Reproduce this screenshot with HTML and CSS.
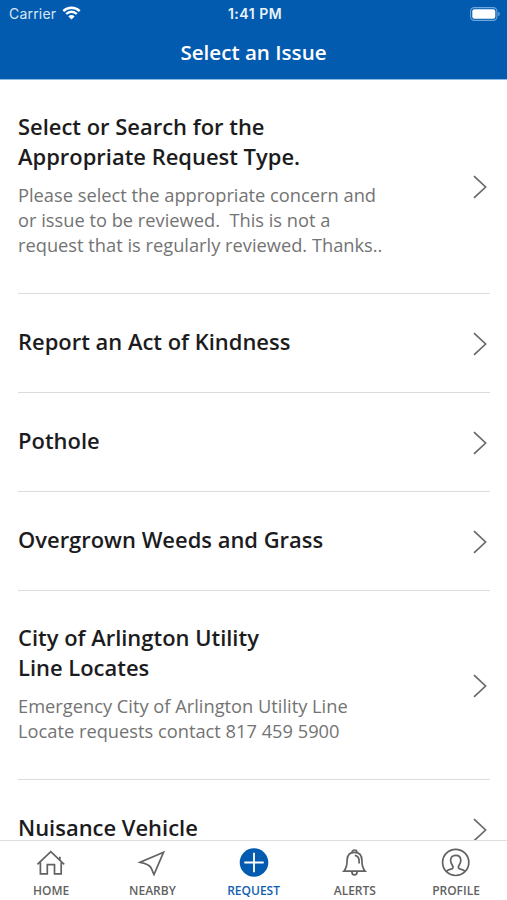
FILE: index.html
```
<!DOCTYPE html>
<html lang="en">
<head>
<meta charset="utf-8">
<title>Select an Issue</title>
<link rel="stylesheet" href="styles.css">
</head>
<body>
<svg class="sprite" aria-hidden="true"><symbol id="chevron" viewBox="0 0 16 24"><path d="M2 1.2 13.6 12 2 22.8"/></symbol></svg>
<div class="app">
  <header class="header">
    <div class="status">
      <div class="carrier"><span class="carrier-name">Carrier</span>
        <svg class="wifi" width="19" height="14" viewBox="0 0 19 14"><path d="M1.3 5.1a11.6 11.6 0 0 1 16.4 0M4.2 8a7.5 7.5 0 0 1 10.6 0" fill="none" stroke="#fff" stroke-width="2.4"/><path d="M6.4 10.4a4.4 4.4 0 0 1 6.2 0L9.5 13.5z" fill="#fff"/></svg>
      </div>
      <time class="clock">1:41 PM</time>
      <svg class="battery" width="31" height="14" viewBox="0 0 31 14"><rect x=".6" y=".6" width="26.3" height="12.8" rx="3.6" fill="none" stroke="#6ea5db" stroke-width="1.1"/><rect x="2.3" y="2.3" width="23" height="9.4" rx="2" fill="#fff"/><path d="M28.2 4.8q1.6.6 1.6 2.2t-1.6 2.2z" fill="#6ea5db"/></svg>
    </div>
    <h1 class="page-title">Select an Issue</h1>
  </header>
  <main class="list">
    <section class="row detailed">
      <div class="copy"><h2 class="title">Select or Search for the<br>Appropriate Request Type.</h2>
      <p class="desc">Please select the appropriate concern and<br>or issue to be reviewed.&nbsp; This is not a<br>request that is regularly reviewed. Thanks..</p></div>
      <svg class="chevron"><use href="#chevron"/></svg>
    </section>
    <section class="row"><div class="copy"><h2 class="title">Report an Act of Kindness</h2></div><svg class="chevron"><use href="#chevron"/></svg></section>
    <section class="row"><div class="copy"><h2 class="title">Pothole</h2></div><svg class="chevron"><use href="#chevron"/></svg></section>
    <section class="row"><div class="copy"><h2 class="title">Overgrown Weeds and Grass</h2></div><svg class="chevron"><use href="#chevron"/></svg></section>
    <section class="row detailed">
      <div class="copy"><h2 class="title">City of Arlington Utility<br>Line Locates</h2>
      <p class="desc">Emergency City of Arlington Utility Line<br>Locate requests contact 817 459 5900</p></div>
      <svg class="chevron"><use href="#chevron"/></svg>
    </section>
    <section class="row"><div class="copy"><h2 class="title">Nuisance Vehicle</h2></div><svg class="chevron"><use href="#chevron"/></svg></section>
  </main>
  <nav class="tabs">
    <a class="tab"><svg class="icon" viewBox="0 0 30 30"><path d="M1.4 16.4 14.8 3.6l13.4 12.8M4.4 14.4v11.4h6.9v-9.2h7.2v9.2h6.7V14.4M23.9 12V8.8"/></svg><span>HOME</span></a>
    <a class="tab"><svg class="icon" viewBox="0 0 30 30"><path d="M26.6 4.2 3.2 14.3c6.4 1.2 10 2.6 11.3 6.3.8 2 1.3 3.8 2.5 6z"/></svg><span>NEARBY</span></a>
    <a class="tab active"><svg class="icon" viewBox="0 0 30 30"><circle class="disc" cx="15" cy="14.5" r="14.3"/><path class="plus" d="M15 4.8v19.4M5.3 14.5h19.4"/></svg><span>REQUEST</span></a>
    <a class="tab"><svg class="icon" viewBox="0 0 30 30"><path d="M3.8 23.2c2.6-3 3.3-5.2 3.3-10.7 0-5.2 2.8-8.2 7.4-8.2s7.4 3 7.4 8.2c0 5.5.7 7.7 3.3 10.7zM12 4.6a2.5 2.6 0 1 1 5 0M11.9 23.4a2.6 3.5 0 0 0 5.2 0M14.8 7.3c2.9.4 4.3 2.5 4.3 6v2.2"/></svg><span>ALERTS</span></a>
    <a class="tab"><svg class="icon" viewBox="0 0 30 30"><circle cx="14.7" cy="14.4" r="13.1"/><path d="M5.1 23.6c1.3-1.4 2.6-2 4.9-2.4 2.3-.4 2.6-1.9 1.3-4-1.2-2-1.7-3-1.7-4.8 0-3.2 1.9-5.1 5.1-5.1s5.1 1.9 5.1 5.1c0 1.8-.5 2.8-1.7 4.8-1.3 2.1-1 3.6 1.3 4 2.3.4 3.6 1 4.9 2.4"/></svg><span>PROFILE</span></a>
  </nav>
</div>
</body>
</html>
```
FILE: styles.css
```
* { box-sizing: border-box; }
body { margin: 0; background: #fff; font-family: "Open Sans", sans-serif; }
h1, h2, p { margin: 0; }
.sprite { display: none; }
.app { display: flex; flex-direction: column; width: 507px; height: 900px; overflow: hidden; }
.header { flex: 0 0 80px; background: #035baf; border-bottom: 1px solid #8dbbe4; color: #fff; }
.status { display: grid; grid-template-columns: 1fr auto 1fr; align-items: center; height: 27px; padding: 0 6px 0 9px; font-family: Inter, sans-serif; }
.carrier { display: flex; align-items: center; gap: 6px; font-size: 14px; letter-spacing: .2px; color: #d8e7f5; }
.wifi { margin-top: -1px; }
.clock { font-size: 14px; font-weight: 600; letter-spacing: .5px; color: #eaf3fb; }
.battery { justify-self: end; }
.page-title { padding-top: 10px; text-align: center; font-size: 20.6px; line-height: 30px; font-weight: 600; }
.list { flex: 1; min-height: 0; overflow: hidden; padding: 0 17px 0 18px; }
.row { display: flex; align-items: center; justify-content: space-between; padding: 33px 0 35px; border-bottom: 1px solid #dcdcdc; }
.detailed { padding-top: 32px; }
.title { color: #1c1c1e; font-size: 21.95px; line-height: 30px; font-weight: 600; white-space: nowrap; }
.desc { margin-top: 10px; margin-bottom: 1px; color: #737373; font-size: 18.27px; line-height: 25px; white-space: nowrap; }
.chevron { width: 16px; height: 24px; margin: 2px 2px -2px 0; fill: none; stroke: #6a6a6a; stroke-width: 1.7; }
.tabs { flex: 0 0 60px; display: grid; grid-template-columns: repeat(5, 1fr); padding: 0 .4px 0 .6px; border-top: 1px solid #dedede; background: #fff; }
.tab { display: flex; flex-direction: column; align-items: center; padding-top: 7px; color: #626262; font-size: 12px; line-height: 16px; font-weight: 600; }
.icon { width: 30px; height: 30px; margin-bottom: 5px; fill: none; stroke: currentColor; stroke-width: 1.7; }
.active { color: #145fb0; }
.disc { fill: #035baf; stroke: none; }
.plus { stroke: #fff; stroke-width: 1.8; }
```
